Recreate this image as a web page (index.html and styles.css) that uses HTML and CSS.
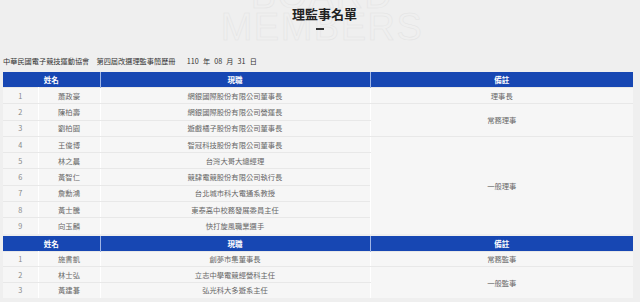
FILE: index.html
```html
<!DOCTYPE html>
<html lang="zh-Hant">
<head>
<meta charset="utf-8">
<title>理監事名單</title>
<link rel="stylesheet" href="styles.css">
</head>
<body>
<div class="page">
  <header class="head">
    <div class="watermark" aria-hidden="true">BOARD<br>MEMBERS</div>
    <h1 class="title">理監事名單</h1>
    <div class="dash"></div>
  </header>
  <p class="subtitle">中華民國電子競技運動協會　第四屆改選理監事簡歷冊　 110 年 08 月 31 日</p>

  <table class="roster board">
    <colgroup><col class="c-no"><col class="c-name"><col class="c-job"><col class="c-note"></colgroup>
    <thead>
      <tr class="hrow"><th colspan="2">姓名</th><th>現職</th><th>備註</th></tr>
    </thead>
    <tbody>
      <tr><td class="no">1</td><td>蕭政豪</td><td>網銀國際股份有限公司董事長</td><td>理事長</td></tr>
      <tr><td class="no">2</td><td>陳柏壽</td><td>網銀國際股份有限公司營運長</td><td rowspan="2">常務理事</td></tr>
      <tr><td class="no">3</td><td>劉柏園</td><td>遊戲橘子股份有限公司董事長</td></tr>
      <tr><td class="no">4</td><td>王俊博</td><td>智冠科技股份有限公司董事長</td><td rowspan="6">一般理事</td></tr>
      <tr><td class="no">5</td><td>林之晨</td><td>台灣大哥大總經理</td></tr>
      <tr><td class="no">6</td><td>黃智仁</td><td>競肆電競股份有限公司執行長</td></tr>
      <tr><td class="no">7</td><td>詹勳鴻</td><td>台北城市科大電通系教授</td></tr>
      <tr><td class="no">8</td><td>黃士騰</td><td>東泰高中校務發展委員主任</td></tr>
      <tr><td class="no">9</td><td>向玉麟</td><td>快打旋風職業選手</td></tr>
    </tbody>
  </table>

  <table class="roster supervisors">
    <colgroup><col class="c-no"><col class="c-name"><col class="c-job"><col class="c-note"></colgroup>
    <thead>
      <tr class="hrow"><th colspan="2">姓名</th><th>現職</th><th>備註</th></tr>
    </thead>
    <tbody>
      <tr><td class="no">1</td><td>施書凱</td><td>創夢市集董事長</td><td>常務監事</td></tr>
      <tr><td class="no">2</td><td>林士弘</td><td>立志中學電競經營科主任</td><td rowspan="2">一般監事</td></tr>
      <tr><td class="no">3</td><td>黃建碁</td><td>弘光科大多遊系主任</td></tr>
    </tbody>
  </table>
</div>
</body>
</html>
```

FILE: styles.css
```css
html, body {
  margin: 0;
  background: #efefef;
}

body {
  font-family: "Noto Sans CJK TC", "Noto Sans", sans-serif;
  color: #333;
}

.page {
  width: 640px;
  overflow: hidden;
}

.head {
  position: relative;
  height: 52px;
  text-align: center;
}

.watermark {
  position: absolute;
  left: 4px;
  right: 0;
  top: -21px;
  font-family: "Liberation Sans", Arial, sans-serif;
  font-size: 38px;
  line-height: 32px;
  letter-spacing: 1.5px;
  color: transparent;
  -webkit-text-stroke: 0.5px #e3e3e3;
  text-align: center;
  white-space: nowrap;
}

.title {
  position: relative;
  margin: 0;
  padding: 5px 0 0 9px;
  font-size: 13px;
  line-height: 18px;
  font-weight: 700;
  color: #222;
}

.dash {
  position: relative;
  width: 8px;
  height: 2px;
  margin: 5px auto 0;
  background: #333;
}

.subtitle {
  margin: 4px 0 0 3px;
  font-size: 7.2px;
  line-height: 10px;
  color: #333;
  word-spacing: 2.5px;
  white-space: nowrap;
}

.roster {
  width: 630px;
  margin-left: 3px;
  border-collapse: collapse;
  border-style: hidden;
  table-layout: fixed;
}

.roster.board {
  margin-top: 6px;
}

.roster.supervisors {
  margin-top: 2px;
}

.c-no { width: 35px; }
.c-name { width: 62px; }
.c-job { width: 270px; }
.c-note { width: 263px; }

.roster th {
  height: 15px;
  padding: 0;
  background: #1747b3;
  color: #fff;
  font-size: 7.5px;
  font-weight: 700;
  line-height: 10px;
  border: none;
  border-left: 1px solid #9fb5e6;
}

.roster th:first-child {
  border-left: none;
}

.roster td {
  padding: 0;
  background: #f6f6f6;
  color: #666;
  font-size: 7.3px;
  line-height: 10px;
  text-align: center;
  border: 1px solid #ffffff;
  border-top-color: #e8e8e8;
  border-bottom-color: #e8e8e8;
}

.roster td.no {
  color: #888;
}

.board tbody tr {
  height: 16.3px;
}

.supervisors tbody tr {
  height: 15.3px;
}
```
